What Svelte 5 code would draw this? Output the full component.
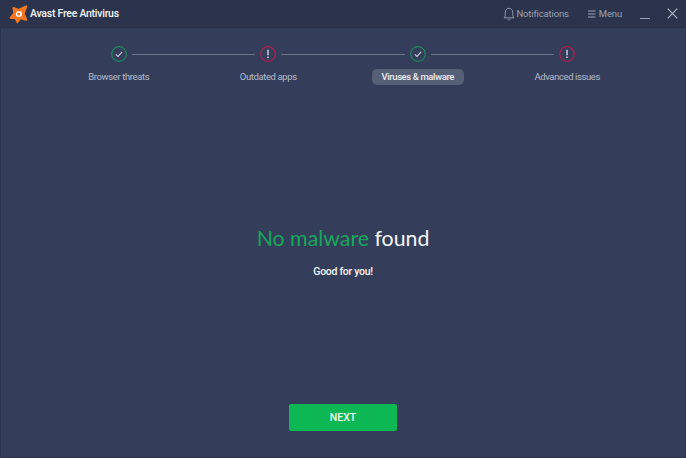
<script lang="ts">
  type Step = { label: string; status: 'ok' | 'warn'; active?: boolean };

  const steps: Step[] = [
    { label: 'Browser threats', status: 'ok' },
    { label: 'Outdated apps', status: 'warn' },
    { label: 'Viruses & malware', status: 'ok', active: true },
    { label: 'Advanced issues', status: 'warn' },
  ];
</script>

<div class="window">
  <header class="titlebar">
    <div class="brand">
      <svg class="logo" width="20" height="20" viewBox="0 0 20 20" aria-hidden="true">
        <path
          fill="#f5761f"
          stroke="#f5761f"
          stroke-width="2.200"
          stroke-linejoin="round"
          d="M4.500 4 L9.500 6 L17.200 2.500 L14.500 9.500 L17.200 15.800 L11 14.300 L8.500 18 L6.500 14 L1.800 13.800 L5.500 9.300z"
        />
        <circle cx="9.700" cy="10" r="2.200" fill="none" stroke="#fff" stroke-width="1.300" />
        <path d="M11.900 7.600v4.700" stroke="#fff" stroke-width="1.200" fill="none" />
      </svg>
      <span class="app-name">Avast Free Antivirus</span>
    </div>
    <div class="actions">
      <span class="action">
        <svg width="12" height="14" viewBox="0 0 12 14" aria-hidden="true">
          <path
            d="M1 10.800c1-.8 1.300-1.800 1.300-3.500V5.400C2.300 3 3.800 1.300 6 1.300S9.700 3 9.700 5.400v1.900c0 1.700.3 2.700 1.300 3.500z"
            fill="none"
            stroke="#98a1b5"
            stroke-width="0.900"
          />
          <path d="M4.600 12.300c.7.800 2.100.8 2.800 0" fill="none" stroke="#98a1b5" stroke-width="0.900" />
        </svg>
        Notifications
      </span>
      <span class="action action--menu">
        <svg width="9" height="8" viewBox="0 0 9 8" aria-hidden="true">
          <path d="M1 1h7.500M1 4h7.500M1 7h7.500" stroke="#98a1b5" stroke-width="1" fill="none" />
        </svg>
        Menu
      </span>
      <span class="minimize"></span>
      <svg class="close" width="11" height="11" viewBox="0 0 11 11" aria-hidden="true">
        <path d="M.7.7l9.600 9.600M10.300.7L.7 10.300" stroke="#aab2c4" stroke-width="1.200" fill="none" />
      </svg>
    </div>
  </header>

  <main class="content">
    <ol class="steps">
      {#each steps as step, i}
        <li class="step">
          <div class="track">
            <span class="segment" class:segment--hidden={i === 0}></span>
            {#if step.status === 'ok'}
              <svg class="status" width="16" height="16" viewBox="0 0 16 16" aria-hidden="true">
                <circle cx="8" cy="8" r="7.300" fill="none" stroke="#1d8a5e" stroke-width="1.200" />
                <path d="M4.800 8.300l2.200 2.100 4.200-4.500" fill="none" stroke="#c9cfdb" stroke-width="1.100" />
              </svg>
            {:else}
              <svg class="status" width="16" height="16" viewBox="0 0 16 16" aria-hidden="true">
                <circle cx="8" cy="8" r="7.300" fill="none" stroke="#b0204f" stroke-width="1.200" />
                <path d="M8 3.800v5.400M8 10.600v1.500" fill="none" stroke="#dfe3ea" stroke-width="1.300" />
              </svg>
            {/if}
            <span class="segment" class:segment--hidden={i === steps.length - 1}></span>
          </div>
          <span class="label" class:label--active={step.active}>{step.label}</span>
        </li>
      {/each}
    </ol>

    <section class="result">
      <h1 class="headline"><span class="headline__green">No malware</span> found</h1>
      <p class="subline">Good for you!</p>
    </section>

    <button class="next" type="button">NEXT</button>
  </main>
</div>

<style>
  :global(body) {
    margin: 0;
    background: #343e5a;
  }

  .window {
    width: 686px;
    height: 458px;
    display: flex;
    flex-direction: column;
    background: #343e5a;
    box-shadow: inset 0 0 0 1px #2b344c;
    font-family: Roboto, Lato, sans-serif;
    overflow: hidden;
  }

  .titlebar {
    height: 28px;
    flex: none;
    box-sizing: border-box;
    display: flex;
    align-items: center;
    justify-content: space-between;
    padding: 0 8px 0 9px;
    background: #2b344c;
    border-bottom: 1px solid #283047;
  }

  .brand {
    display: flex;
    align-items: center;
    gap: 1px;
  }

  .app-name {
    color: #f2f4f8;
    font-size: 10.500px;
    font-weight: 500;
    letter-spacing: -0.25px;
  }

  .actions {
    display: flex;
    align-items: center;
  }

  .action {
    display: flex;
    align-items: center;
    gap: 1px;
    margin-right: 18px;
    color: #98a1b5;
    font-size: 9.500px;
    letter-spacing: -0.15px;
  }

  .action--menu {
    gap: 3px;
  }

  .minimize {
    width: 10px;
    height: 1px;
    margin: 9px 17px 0 0;
    background: #98a1b5;
  }

  .content {
    flex: 1;
    display: flex;
    flex-direction: column;
    align-items: center;
    min-height: 0;
  }

  .steps {
    list-style: none;
    margin: 0;
    padding: 18px 44px 0;
    width: 100%;
    box-sizing: border-box;
    display: grid;
    grid-template-columns: repeat(4, 1fr);
  }

  .step {
    display: flex;
    flex-direction: column;
    align-items: center;
    gap: 7px;
  }

  .track {
    width: 100%;
    display: flex;
    align-items: center;
    gap: 5px;
  }

  .segment {
    flex: 1;
    height: 1px;
    background: #6b7289;
  }

  .segment--hidden {
    visibility: hidden;
  }

  .status {
    flex: none;
  }

  .label {
    padding: 2px 10px;
    border-radius: 5px;
    color: #b4bbcb;
    font-size: 9.500px;
    letter-spacing: -0.4px;
    line-height: 12px;
  }

  .label--active {
    background: #565f78;
    color: #e9ecf2;
    font-weight: 500;
  }

  .result {
    margin-top: 139px;
    display: flex;
    flex-direction: column;
    align-items: center;
  }

  .headline {
    margin: 0;
    color: #f4f6fa;
    font: 400 21.300px/28px Lato, sans-serif;
  }

  .headline__green {
    color: #16a85a;
  }

  .subline {
    margin: 13px 0 0;
    color: #f4f6fa;
    font-size: 10.500px;
    font-weight: 500;
    letter-spacing: -0.3px;
    line-height: 14px;
  }

  .next {
    margin-top: auto;
    margin-bottom: 27px;
    width: 108px;
    height: 27px;
    padding: 0;
    border: 0;
    border-radius: 2px;
    background: #0cb754;
    color: #f4fbf6;
    font: 500 10.500px Roboto, sans-serif;
  }
</style>
